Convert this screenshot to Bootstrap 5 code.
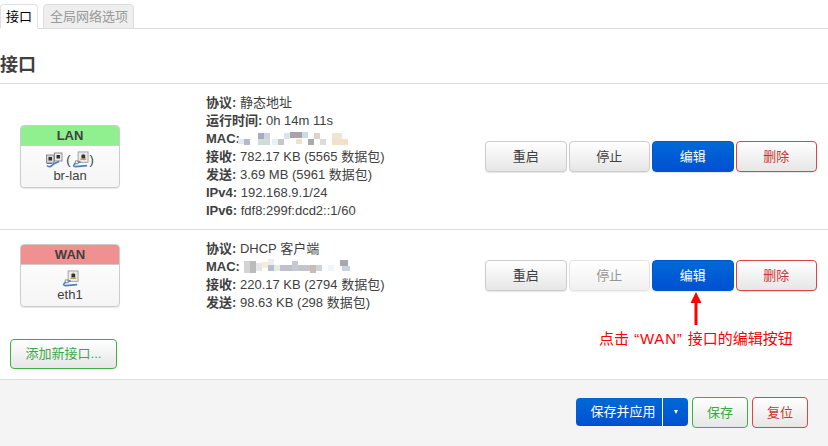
<!DOCTYPE html>
<html lang="zh-CN">
<head>
<meta charset="utf-8">
<title>接口</title>
<link href="https://cdn.jsdelivr.net/npm/bootstrap@5.3.0/dist/css/bootstrap.min.css" rel="stylesheet">
<style>
html,body{height:100%;}
body{font-family:"Liberation Sans","Noto Sans CJK SC",sans-serif;font-size:13px;line-height:18px;color:#404040;background:#fff;overflow:hidden;}
.pg{height:446px;display:flex;flex-direction:column;position:relative;}
.tabs-bar{padding-top:4px;gap:5px;border-bottom:1px solid #ddd;height:29px;flex-wrap:nowrap;flex:none;}
.tabs-bar .nav-link{height:25px;padding:3px 5px;font-size:13px;line-height:18px;border:1px solid #ddd;border-radius:4px 4px 0 0;white-space:nowrap;}
.tabs-bar .tab-on{color:#0069d6;background:#fff;border-bottom-color:#fff;width:38px;}
.tabs-bar .tab-off{color:#999;background:#eee;border-bottom-color:#ddd;width:91px;padding-left:6px;}
.sec-title{font-size:18px;font-weight:700;line-height:24px;margin:24px 0 6px;color:#404040;}
.if-row{border-top:1px solid #ddd;display:flex;align-items:center;}
.if-one{height:146px;}
.if-two{height:92px;}
.if-cell{width:206px;padding-left:20px;flex:none;}
.if-box{width:100px;height:63px;border:1px solid #ccc;border-radius:4px;box-shadow:0 1px 1px rgba(0,0,0,.1);background:linear-gradient(#fff,#f5f5f5);overflow:hidden;text-align:center;}
.if-head{height:20px;line-height:19px;font-weight:700;font-size:13px;border-bottom:1px solid #ccc;}
.h-lan{background:#90f090;}
.h-wan{background:#f09090;}
.if-icons{height:22px;display:flex;justify-content:center;align-items:flex-end;gap:1px;padding-top:2px;}
.if-name{line-height:16px;}
.if-paren{color:#404040;line-height:17px;}
.if-paren-open{margin-left:2px;}
.if-info{width:279px;flex:none;}
.mac-one{vertical-align:-2px;margin-left:-6px;}
.mac-two{vertical-align:-2px;margin-left:0;}
.act-group{display:flex;gap:2px;}
.ac-btn{width:81.5px;height:31px;padding:0;font-size:13px;line-height:29px;border-radius:4px;border:1px solid #ccc;color:#404040;background:linear-gradient(#fff,#e6e6e6);box-shadow:0 1px 1px rgba(0,0,0,.1);}
.ac-btn:disabled{opacity:.55;color:#404040;background:linear-gradient(#fff,#e6e6e6);border-color:#ccc;}
.ac-blue{color:#fff;border-color:#0058c8;background:linear-gradient(#0069d6,#0050d2);}
.ac-red{color:#c33;border-color:#d44;}
.add-wrap{padding:0 0 0 10px;margin-top:18px;}
.add-btn{width:107px;height:30px;padding:0;font-size:13px;line-height:28px;border:1px solid #3cb043;border-radius:4px;color:#3aa843;background:linear-gradient(#fff,#e6e6e6);}
.foot-bar{margin-top:auto;height:67px;background:#f4f4f4;border-top:1px solid #ddd;display:flex;justify-content:flex-end;align-items:flex-start;padding:17px 20px 0 0;gap:4px;}
.save-split{display:flex;width:112px;height:28px;margin-top:1px;border-radius:4px;overflow:hidden;background:linear-gradient(#0069d6,#0050d2);}
.save-main{width:87px;height:28px;padding:0 0 0 8px;color:#fff;font-size:13px;line-height:28px;border:0;border-right:1px solid #fff;background:transparent;border-radius:0;}
.save-caret{flex:1;height:28px;padding:0;border:0;background:transparent;display:flex;align-items:center;justify-content:center;}
.caret-tri{width:0;height:0;border-left:2.5px solid transparent;border-right:2.5px solid transparent;border-top:4px solid #fff;}
.foot-btn{width:56px;height:31px;padding:0;font-size:13px;line-height:29px;border-radius:4px;background:linear-gradient(#fff,#e6e6e6);}
.fb-green{border:1px solid #3cb043;color:#3aa843;}
.fb-red{border:1px solid #d44;color:#c33;}
.note-arrow{position:absolute;left:690px;top:292px;}
.note-text{position:absolute;left:599px;top:330px;color:#f00;font-size:15px;line-height:18px;white-space:nowrap;word-spacing:1px;}
.note-en{letter-spacing:.8px;}
</style>
</head>
<body>
<svg width="0" height="0" class="d-none" aria-hidden="true">
<symbol id="port" viewBox="0 0 18 18">
<rect x="6.5" y="1" width="10.5" height="11" fill="#ececec" stroke="#a0a0a0"/>
<rect x="10" y="4" width="4" height="4" fill="#333"/>
<rect x="11" y="3" width="2" height="1" fill="#777"/>
<rect x="9" y="8" width="6" height="1.5" fill="#b9a24a"/>
<path d="M9 11 L3 13.5 Q0 16 4 16.5 L16 15.5" fill="none" stroke="#4f7fc0" stroke-width="1.7"/>
<path d="M3.5 10.5h3v3h-3z" fill="#fff" stroke="#6a6a6a" stroke-width=".8"/>
</symbol>
<symbol id="port2" viewBox="0 0 17 16">
<rect x=".5" y="3" width="7.5" height="8" fill="#d8d8d8" stroke="#808080" stroke-width=".9"/>
<rect x="2.5" y="5" width="3.5" height="3.5" fill="#333"/>
<rect x="8.5" y="1" width="7.5" height="8" fill="#ececec" stroke="#808080" stroke-width=".9"/>
<rect x="10.5" y="3" width="3.5" height="3.5" fill="#333"/>
<path d="M1 13.5 Q4 16.5 7.5 12 L13 9.5" fill="none" stroke="#4f7fc0" stroke-width="1.7"/>
<path d="M1 11.5 h5" stroke="#4f7fc0" stroke-width="1.2"/>
</symbol>
</svg>
<div class="pg">
  <ul class="nav nav-tabs tabs-bar">
    <li class="nav-item"><a class="nav-link tab-on active" href="#">接口</a></li>
    <li class="nav-item"><a class="nav-link tab-off" href="#">全局网络选项</a></li>
  </ul>
  <h3 class="sec-title">接口</h3>

  <div class="if-row if-one">
    <div class="if-cell">
      <div class="if-box">
        <div class="if-head h-lan">LAN</div>
        <div class="if-icons">
          <svg width="17" height="16"><use href="#port2"/></svg>
          <span class="if-paren if-paren-open">(</span><svg width="17" height="17"><use href="#port"/></svg><span class="if-paren">)</span>
        </div>
        <div class="if-name">br-lan</div>
      </div>
    </div>
    <div class="if-info">
      <div><strong>协议:</strong> 静态地址</div>
      <div><strong>运行时间:</strong> 0h 14m 11s</div>
      <div><strong>MAC:</strong>
        <svg class="mac-one" width="112" height="14">
          <rect x="0" y="8" width="6" height="5" fill="#e4e7ef"/><rect x="6" y="8" width="6" height="6" fill="#b5b6d2"/><rect x="20" y="2" width="6" height="6" fill="#a9a9c0"/><rect x="26" y="2" width="6" height="6" fill="#cfd3dd"/><rect x="20" y="8" width="12" height="6" fill="#cfdcd8"/><rect x="34" y="8" width="6" height="6" fill="#e4f2f6"/><rect x="40" y="8" width="6" height="6" fill="#c4c8c8"/><rect x="46" y="2" width="6" height="6" fill="#d9e4ec"/><rect x="52" y="1" width="12" height="6" fill="#a9a2a8"/><rect x="64" y="1" width="6" height="6" fill="#c9dbe8"/><rect x="58" y="8" width="6" height="5" fill="#f2e0c8"/><rect x="70" y="8" width="6" height="6" fill="#aaa"/><rect x="76" y="2" width="6" height="6" fill="#d9d5cc"/><rect x="82" y="8" width="6" height="6" fill="#dcdcdc"/><rect x="94" y="2" width="10" height="6" fill="#f0e4d6"/><rect x="94" y="8" width="16" height="6" fill="#f0e0cc"/>
        </svg>
      </div>
      <div><strong>接收:</strong> 782.17 KB (5565 数据包)</div>
      <div><strong>发送:</strong> 3.69 MB (5961 数据包)</div>
      <div><strong>IPv4:</strong> 192.168.9.1/24</div>
      <div><strong>IPv6:</strong> fdf8:299f:dcd2::1/60</div>
    </div>
    <div class="act-group">
      <button class="btn ac-btn">重启</button>
      <button class="btn ac-btn">停止</button>
      <button class="btn ac-btn ac-blue">编辑</button>
      <button class="btn ac-btn ac-red">删除</button>
    </div>
  </div>

  <div class="if-row if-two">
    <div class="if-cell">
      <div class="if-box">
        <div class="if-head h-wan">WAN</div>
        <div class="if-icons"><svg width="17" height="17"><use href="#port"/></svg></div>
        <div class="if-name">eth1</div>
      </div>
    </div>
    <div class="if-info">
      <div><strong>协议:</strong> DHCP 客户端</div>
      <div><strong>MAC:</strong>
        <svg class="mac-two" width="108" height="14">
          <rect x="0" y="2" width="6" height="12" fill="#d4d4d4"/><rect x="6" y="2" width="6" height="12" fill="#bbb"/><rect x="12" y="4" width="6" height="8" fill="#e6e6e6"/><rect x="18" y="3" width="6" height="6" fill="#f6ecd8"/><rect x="24" y="0" width="6" height="6" fill="#eee"/><rect x="24" y="6" width="6" height="6" fill="#b5bcd4"/><rect x="30" y="6" width="6" height="6" fill="#dcefe0"/><rect x="36" y="6" width="12" height="6" fill="#bfc0cc"/><rect x="48" y="2" width="6" height="10" fill="#c8c8d0"/><rect x="54" y="6" width="12" height="6" fill="#c4c4cc"/><rect x="66" y="6" width="6" height="8" fill="#c8bcb4"/><rect x="72" y="6" width="6" height="6" fill="#cdd4dc"/><rect x="84" y="6" width="6" height="6" fill="#eef6fa"/><rect x="96" y="1" width="8" height="6" fill="#a8a8b0"/><rect x="98" y="7" width="8" height="5" fill="#c8d4dc"/>
        </svg>
      </div>
      <div><strong>接收:</strong> 220.17 KB (2794 数据包)</div>
      <div><strong>发送:</strong> 98.63 KB (298 数据包)</div>
    </div>
    <div class="act-group">
      <button class="btn ac-btn">重启</button>
      <button class="btn ac-btn" disabled>停止</button>
      <button class="btn ac-btn ac-blue">编辑</button>
      <button class="btn ac-btn ac-red">删除</button>
    </div>
  </div>

  <div class="add-wrap"><button class="btn add-btn">添加新接口...</button></div>

  <div class="foot-bar">
    <div class="save-split">
      <button class="btn save-main">保存并应用</button>
      <button class="btn save-caret" aria-label="更多"><span class="caret-tri"></span></button>
    </div>
    <button class="btn foot-btn fb-green">保存</button>
    <button class="btn foot-btn fb-red">复位</button>
  </div>

  <svg class="note-arrow" width="12" height="34"><path d="M6 0 L11.5 11 H7.5 V33 H4.5 V11 H.5 Z" fill="#f00"/></svg>
  <div class="note-text">点击 <span class="note-en">“WAN”</span> 接口的编辑按钮</div>
</div>
</body>
</html>
